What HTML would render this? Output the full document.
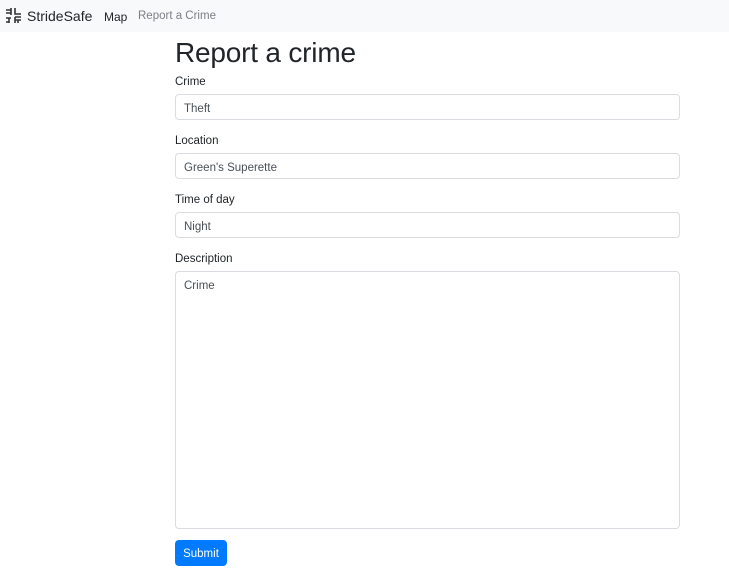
<!DOCTYPE html>
<html><head><style>
*{box-sizing:border-box;margin:0;padding:0}
body{width:729px;height:573px;background:#fff;font-family:"Liberation Sans",sans-serif;color:#212529;position:relative;overflow:hidden}
.nav{position:absolute;left:0;top:0;width:729px;height:32px;background:#f8f9fa}
.brand{position:absolute;left:27px;top:8px;font-size:14px;color:#212529}
.logo{position:absolute;left:5px;top:7px}
.n1{position:absolute;left:104px;top:10px;font-size:12px;color:#212529}
.n2{position:absolute;left:138px;top:10px;font-size:11.5px;color:#7b7f84}
h1{position:absolute;left:175px;top:37px;font-size:28px;font-weight:400;color:#212529;letter-spacing:-0.2px}
.l{position:absolute;left:175px;font-size:11.5px}
.in{position:absolute;left:175px;width:505px;height:26px;border:1px solid #d9dde1;border-radius:4px;font-size:11.5px;padding:8px 8px;color:#495057}
.btn{position:absolute;left:175px;top:540px;width:52px;height:26px;background:#007bff;border-radius:4px;color:#fff;font-size:11.5px;text-align:center;line-height:28px}
</style></head><body>
<div class="nav">
<svg class="logo" width="17" height="17" viewBox="0 0 17 17" fill="none" stroke="#333" stroke-width="1.6">
<path d="M1 3h5M1 6h5M6 1v7M10 1v6h6M1 11h5M4 11v5M1 15h3M10 10h6M10 10v6M10 13h6M13 13v3"/></svg>
<div class="brand">StrideSafe</div>
<div class="n1">Map</div><div class="n2">Report a Crime</div>
</div>
<h1>Report a crime</h1>
<div class="l" style="top:76px">Crime</div>
<div class="in" style="top:94px">Theft</div>
<div class="l" style="top:135px">Location</div>
<div class="in" style="top:153px">Green's Superette</div>
<div class="l" style="top:194px">Time of day</div>
<div class="in" style="top:212px">Night</div>
<div class="l" style="top:253px">Description</div>
<div class="in" style="top:271px;height:258px">Crime</div>
<div class="btn">Submit</div>
</body></html>
